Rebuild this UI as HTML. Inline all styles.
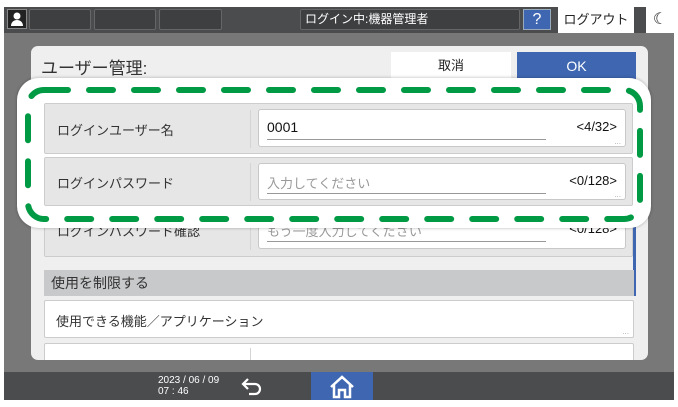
<!DOCTYPE html>
<html><head><meta charset="utf-8"><style>
*{margin:0;padding:0;box-sizing:border-box}
body{width:678px;height:407px;background:#fff;position:relative;overflow:hidden;font-family:"Liberation Sans","Noto Sans CJK JP",sans-serif;color:#333}
.a{position:absolute}
.top{left:4px;top:7px;width:670px;height:26px;background:#4b4c4e}
.body{left:4px;top:33px;width:670px;height:339px;background:#787878}
.bot{left:4px;top:372px;width:670px;height:28px;background:#4b4c4e}
.tb{top:9px;height:21px;border:1px solid #666;background:#3e3f41;border-radius:2px}
.panel{left:31px;top:46px;width:617px;height:314px;background:#efefef;border-radius:7px;overflow:hidden}
.row{background:#e6e6e6;border:1px solid #ccc;border-radius:2px}
.inp{background:#fff;border:1px solid #c8c8c8;border-radius:3px}
.lab{font-size:13px;color:#333}
.dots{font-size:8px;color:#aaa;letter-spacing:0}
</style></head><body>
<div class="a top"></div>
<div class="a body"></div>
<div class="a bot"></div>
<div class="a" style="left:7px;top:9px;width:20px;height:20px;background:#222;border:1px solid #888"><svg width="18" height="18" viewBox="0 0 18 18"><circle cx="9" cy="6" r="3.5" fill="#fff"/><path d="M3 16c0-4 3-6 6-6s6 2 6 6z" fill="#fff"/></svg></div>
<div class="a tb" style="left:29px;width:62px"></div>
<div class="a tb" style="left:94px;width:62px"></div>
<div class="a tb" style="left:159px;width:63px"></div>
<div class="a tb" style="left:300px;width:220px;color:#fff;font-size:12px;line-height:19px;padding-left:4px">ログイン中:機器管理者</div>
<div class="a" style="left:523px;top:9px;width:28px;height:21px;background:#3f67b1;border:1px solid #9ab;color:#fff;font-size:16px;text-align:center;line-height:20px">?</div>
<div class="a" style="left:558px;top:7px;width:76px;height:26px;background:#fff;font-size:13px;line-height:26px;text-align:center;color:#222">ログアウト</div>
<div class="a" style="left:646px;top:7px;width:28px;height:26px;background:#fff;font-size:16px;line-height:26px;text-align:center;color:#222">☾</div>

<div class="a panel">
 <div class="a" style="left:10px;top:8px;font-size:17px;color:#333">ユーザー管理:</div>
 <div class="a" style="left:360px;top:6px;width:120px;height:28px;background:#fff;font-size:13px;text-align:center;line-height:28px;color:#222">取消</div>
 <div class="a" style="left:486px;top:6px;width:119px;height:28px;background:#3f67b1;font-size:14px;text-align:center;line-height:28px;color:#fff">OK</div>
 <div class="a" style="left:602px;top:40px;width:3px;height:210px;background:#3f67b1"></div>
 <div class="a row" style="left:13px;top:159px;width:589px;height:52px"><div class="a lab" style="left:12px;top:15px">ログインパスワード確認</div><div class="a" style="left:205px;top:6px;width:1px;height:38px;background:#d4d4d4"></div><div class="a inp" style="left:213px;top:5px;width:368px;height:38px"><div class="a" style="left:8px;top:9px;font-size:13px;color:#999">もう一度入力してください</div><div class="a" style="left:8px;top:29px;width:279px;height:1px;background:#999"></div><div class="a" style="right:8px;top:9px;font-size:13px;color:#111">&lt;0/128&gt;</div></div></div>
 <div class="a" style="left:13px;top:224px;width:590px;height:26px;background:#c8c9cb;font-size:14px;line-height:26px;padding-left:7px;color:#333">使用を制限する</div>
 <div class="a" style="left:13px;top:254px;width:590px;height:38px;background:#fff;border:1px solid #ccc;border-radius:2px"><div class="a lab" style="left:11px;top:10px">使用できる機能／アプリケーション</div><div class="a dots" style="right:4px;bottom:1px">...</div></div>
 <div class="a" style="left:13px;top:297px;width:590px;height:30px;background:#fff;border:1px solid #ccc;border-radius:2px"><div class="a" style="left:205px;top:4px;width:1px;height:26px;background:#d4d4d4"></div></div>
</div>

<div class="a" style="left:17px;top:78px;width:634px;height:150px;background:#fff;border-radius:22px;box-shadow:0 0 3px rgba(0,0,0,.3)"></div>
<div class="a row" style="left:44px;top:103px;width:589px;height:51px"><div class="a lab" style="left:12px;top:16px">ログインユーザー名</div><div class="a" style="left:205px;top:6px;width:1px;height:38px;background:#d4d4d4"></div><div class="a inp" style="left:213px;top:5px;width:368px;height:38px"><div class="a" style="left:8px;top:9px;font-size:14px;color:#111">0001</div><div class="a" style="left:8px;top:29px;width:279px;height:1px;background:#999"></div><div class="a" style="right:8px;top:9px;font-size:13px;color:#111">&lt;4/32&gt;</div><div class="a dots" style="right:4px;bottom:0">...</div></div></div>
<div class="a row" style="left:44px;top:157px;width:589px;height:49px"><div class="a lab" style="left:12px;top:15px">ログインパスワード</div><div class="a" style="left:205px;top:5px;width:1px;height:38px;background:#d4d4d4"></div><div class="a inp" style="left:213px;top:5px;width:368px;height:37px"><div class="a" style="left:8px;top:9px;font-size:13px;color:#999">入力してください</div><div class="a" style="left:8px;top:29px;width:279px;height:1px;background:#999"></div><div class="a" style="right:8px;top:9px;font-size:13px;color:#111">&lt;0/128&gt;</div><div class="a dots" style="right:4px;bottom:0">...</div></div></div>
<svg class="a" style="left:0;top:0" width="678" height="407"><rect x="28" y="90" width="612" height="129" rx="16" fill="none" stroke="#009944" stroke-width="6" stroke-linecap="round" stroke-dasharray="24 21"/></svg>

<div class="a" style="left:158px;top:375px;font-size:10px;line-height:11px;color:#fff">2023 / 06 / 09<br>07 : 46</div>
<div class="a" style="left:240px;top:376px"><svg width="24" height="20" viewBox="0 0 24 20"><path d="M8 3 3 8l5 5M3 8h12a5 5 0 0 1 0 10H9" fill="none" stroke="#fff" stroke-width="2.2"/></svg></div>
<div class="a" style="left:311px;top:372px;width:62px;height:28px;background:#3f67b1"><svg width="62" height="28" viewBox="0 0 62 28"><path d="M20 15 31 5l11 10M23 13v12h5v-7h6v7h5V13" fill="none" stroke="#fff" stroke-width="2.5"/></svg></div>
</body></html>
